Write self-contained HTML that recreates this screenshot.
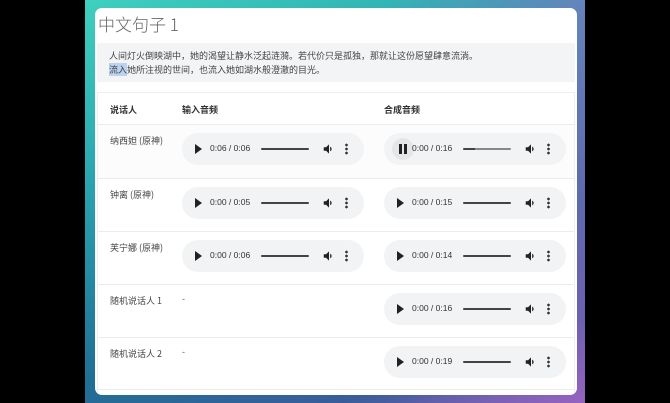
<!DOCTYPE html>
<html><head><meta charset="utf-8"><style>
*{margin:0;padding:0;box-sizing:border-box}
body{width:670px;height:403px;background:#000;position:relative;overflow:hidden;font-family:"Liberation Sans","Noto Sans CJK SC",sans-serif}
.bg{position:absolute;left:85px;top:0;width:500px;height:403px;background:linear-gradient(160deg,#3fd0be 0%,#2aa6b0 30%,#1f6f95 65%,#3a5d9a 85%,#8a62b8 100%)}
.bg2{position:absolute;left:85px;top:0;width:500px;height:403px;background:linear-gradient(90deg,rgba(0,0,0,0) 60%,rgba(160,100,200,.5) 100%)}
.card{position:absolute;left:95px;top:8px;width:482px;height:387px;background:#fff;border-radius:7px;overflow:hidden}
.title{position:absolute;left:3px;top:3px;font-size:17px;color:#666;font-family:"Noto Sans CJK SC",sans-serif;font-weight:300}
.box{position:absolute;left:2px;top:35px;width:478px;height:39px;background:#f3f4f6;font-size:9px;color:#444;padding:6px 0 0 12px;line-height:14px;font-family:"Noto Sans CJK SC",sans-serif}
.sel{background:#b9d3f0}
.tbl{position:absolute;left:2px;top:84px;width:478px;height:300px;border:1px solid #eee;border-bottom:none}
.row{position:absolute;left:0;width:476px;border-top:1px solid #ececec}
.h{font-size:9px;font-weight:bold;color:#333;position:absolute;top:10px;font-family:"Noto Sans CJK SC",sans-serif}
.n{position:absolute;left:12px;top:9px;font-size:9px;color:#444;font-family:"Noto Sans CJK SC",sans-serif}
.dash{position:absolute;left:84px;top:9px;font-size:9px;color:#666}
.p{position:absolute;width:182px;height:32px;border-radius:16px;background:#f1f3f4}
.p .pl{position:absolute;left:13px;top:11px;width:0;height:0;border-left:7px solid #222;border-top:5px solid transparent;border-bottom:5px solid transparent}
.p .pa{position:absolute;left:8px;top:5px;width:22px;height:22px;border-radius:11px;background:#e4e6e8}
.p .pa:before,.p .pa:after{content:"";position:absolute;top:6px;width:3px;height:10px;background:#222}
.p .pa:before{left:7px}.p .pa:after{left:12px}
.p .t{position:absolute;left:28px;top:10px;font-size:8.5px;color:#333}
.p .s{position:absolute;left:79px;top:15px;width:48px;height:2px;background:#444;border-radius:1px}
.p .v{position:absolute;left:140px;top:9px}
.p .d{position:absolute;left:163px;top:10px;width:3px;height:12px;background:radial-gradient(circle,#333 1.2px,transparent 1.5px) 0 0/3px 4px}
</style></head><body>
<div class="bg"></div><div class="bg2"></div>
<div class="card">
<div class="title">中文句子 1</div>
<div class="box">人间灯火倒映湖中，她的渴望让静水泛起涟漪。若代价只是孤独，那就让这份愿望肆意流淌。<br><span class="sel">流入</span>她所注视的世间，也流入她如湖水般澄澈的目光。</div>
<div class="tbl">
<div class="row" style="top:0;height:31px;border-top:none"><span class="h" style="left:12px">说话人</span><span class="h" style="left:84px">输入音频</span><span class="h" style="left:286px">合成音频</span></div>
<div class="row" style="top:31px;height:54px;background:#fcfcfc"><span class="n">纳西妲 (原神)</span>
<div class="p" style="left:84px;top:8px"><i class="pl"></i><span class="t">0:06 / 0:06</span><i class="s"></i><svg class="v" width="14" height="14" viewBox="0 0 24 24"><path fill="#222" d="M3 9v6h4l5 5V4L7 9H3zm13.5 3A4.5 4.5 0 0 0 14 8v8a4.5 4.5 0 0 0 2.5-4z"/></svg><i class="d"></i></div>
<div class="p" style="left:286px;top:8px"><i class="pa"></i><span class="t">0:00 / 0:16</span><i class="s" style="background:linear-gradient(90deg,#444 25%,#888 25%)"></i><svg class="v" width="14" height="14" viewBox="0 0 24 24"><path fill="#222" d="M3 9v6h4l5 5V4L7 9H3zm13.5 3A4.5 4.5 0 0 0 14 8v8a4.5 4.5 0 0 0 2.5-4z"/></svg><i class="d"></i></div></div>
<div class="row" style="top:85px;height:53px"><span class="n">钟离 (原神)</span>
<div class="p" style="left:84px;top:8px"><i class="pl"></i><span class="t">0:00 / 0:05</span><i class="s"></i><svg class="v" width="14" height="14" viewBox="0 0 24 24"><path fill="#222" d="M3 9v6h4l5 5V4L7 9H3zm13.5 3A4.5 4.5 0 0 0 14 8v8a4.5 4.5 0 0 0 2.5-4z"/></svg><i class="d"></i></div>
<div class="p" style="left:286px;top:8px"><i class="pl"></i><span class="t">0:00 / 0:15</span><i class="s"></i><svg class="v" width="14" height="14" viewBox="0 0 24 24"><path fill="#222" d="M3 9v6h4l5 5V4L7 9H3zm13.5 3A4.5 4.5 0 0 0 14 8v8a4.5 4.5 0 0 0 2.5-4z"/></svg><i class="d"></i></div></div>
<div class="row" style="top:138px;height:53px"><span class="n">芙宁娜 (原神)</span>
<div class="p" style="left:84px;top:8px"><i class="pl"></i><span class="t">0:00 / 0:06</span><i class="s"></i><svg class="v" width="14" height="14" viewBox="0 0 24 24"><path fill="#222" d="M3 9v6h4l5 5V4L7 9H3zm13.5 3A4.5 4.5 0 0 0 14 8v8a4.5 4.5 0 0 0 2.5-4z"/></svg><i class="d"></i></div>
<div class="p" style="left:286px;top:8px"><i class="pl"></i><span class="t">0:00 / 0:14</span><i class="s"></i><svg class="v" width="14" height="14" viewBox="0 0 24 24"><path fill="#222" d="M3 9v6h4l5 5V4L7 9H3zm13.5 3A4.5 4.5 0 0 0 14 8v8a4.5 4.5 0 0 0 2.5-4z"/></svg><i class="d"></i></div></div>
<div class="row" style="top:191px;height:53px"><span class="n">随机说话人 1</span><span class="dash">-</span>
<div class="p" style="left:286px;top:8px"><i class="pl"></i><span class="t">0:00 / 0:16</span><i class="s"></i><svg class="v" width="14" height="14" viewBox="0 0 24 24"><path fill="#222" d="M3 9v6h4l5 5V4L7 9H3zm13.5 3A4.5 4.5 0 0 0 14 8v8a4.5 4.5 0 0 0 2.5-4z"/></svg><i class="d"></i></div></div>
<div class="row" style="top:244px;height:53px;border-bottom:1px solid #ececec"><span class="n">随机说话人 2</span><span class="dash">-</span>
<div class="p" style="left:286px;top:8px"><i class="pl"></i><span class="t">0:00 / 0:19</span><i class="s"></i><svg class="v" width="14" height="14" viewBox="0 0 24 24"><path fill="#222" d="M3 9v6h4l5 5V4L7 9H3zm13.5 3A4.5 4.5 0 0 0 14 8v8a4.5 4.5 0 0 0 2.5-4z"/></svg><i class="d"></i></div></div>
</div>
</div>
</body></html>
